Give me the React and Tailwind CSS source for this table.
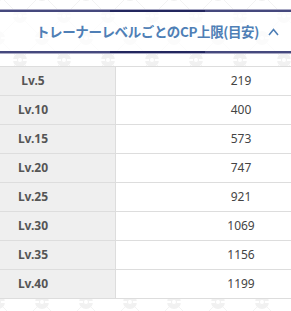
const rows = [
  ["Lv.5", 219],
  ["Lv.10", 400],
  ["Lv.15", 573],
  ["Lv.20", 747],
  ["Lv.25", 921],
  ["Lv.30", 1069],
  ["Lv.35", 1156],
  ["Lv.40", 1199],
];

const Pattern = () => (
  <svg className="absolute inset-0 h-full w-full" aria-hidden="true">
    <defs>
      <pattern id="balls" width="44" height="44" patternUnits="userSpaceOnUse" x="-2" y="-6">
        <g stroke="#f3f3f3" strokeWidth="1" fill="none">
          <line x1="0" y1="0" x2="44" y2="44" />
          <line x1="44" y1="0" x2="0" y2="44" />
        </g>
        {[
          [0, 0],
          [44, 0],
          [0, 44],
          [44, 44],
          [22, 22],
        ].map(([cx, cy], i) => (
          <g key={i}>
            <circle cx={cx} cy={cy} r="7" fill="#f1f1f1" />
            <rect x={cx - 7} y={cy - 1} width="14" height="2" fill="#fff" />
            <circle cx={cx} cy={cy} r="2.6" fill="#fff" stroke="#f1f1f1" strokeWidth="1" />
          </g>
        ))}
      </pattern>
    </defs>
    <rect width="100%" height="100%" fill="url(#balls)" />
  </svg>
);

export default function App() {
  return (
    <div className="relative h-[311px] w-[291px] overflow-hidden bg-white font-['Noto_Sans','Noto_Sans_CJK_JP',sans-serif]">
      <Pattern />
      <div className="relative pt-[9px]">
        {/* 見出し */}
        <div className="relative">
          <div className="h-px bg-[#a9a9c4]" />
          <div className="flex h-[2px] bg-[#45487d]">
            <div className="w-[110px]" />
            <div className="w-[95px] bg-[#23265e]" />
          </div>
          <div className="flex h-[39px] items-center bg-white/70 pl-[36px]">
            <span className="font-['Noto_Sans_CJK_JP',sans-serif] text-[13.5px] font-bold tracking-[-0.4px] text-[#4f7fb6]">
              トレーナーレベルごとのCP上限(目安)
            </span>
            <svg width="11" height="8" viewBox="0 0 11 8" className="ml-[9px] mt-[1px]">
              <polyline points="1,7 5.5,1.5 10,7" fill="none" stroke="#4f7fb6" strokeWidth="1.6" />
            </svg>
          </div>
          <div className="flex h-[2px] bg-[#45487d]">
            <div className="w-[110px]" />
            <div className="w-[95px] bg-[#23265e]" />
          </div>
          <div className="h-px bg-[#a9a9c4]" />
        </div>

        {/* テーブル */}
        <div className="mt-[12px] border-t border-[#dddddd]">
          {rows.map(([lv, cp]) => (
            <div key={lv} className="flex h-[29px] border-b border-[#dddddd]">
              <div className="flex w-[116px] items-center border-r border-[#dddddd] bg-[#efefef]">
                <span className="w-[66px] text-center text-[12px] font-bold text-[#555555]">{lv}</span>
              </div>
              <div className="flex flex-1 items-center justify-end bg-white">
                <span className="w-[100px] text-center text-[12px] text-[#444444]">{cp}</span>
              </div>
            </div>
          ))}
        </div>
      </div>
    </div>
  );
}
